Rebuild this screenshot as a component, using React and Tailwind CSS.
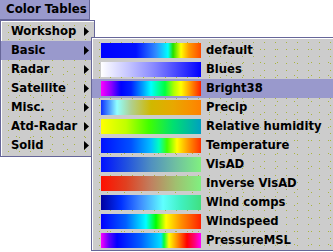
import React from "react";

const categories = ["Workshop", "Basic", "Radar", "Satellite", "Misc.", "Atd-Radar", "Solid"];

// colour tables in the Basic submenu
const tables = [
  { name: "default", bar: "bg-[linear-gradient(90deg,#0000ff_0%,#0010ff_35%,#2f8cff_55%,#00ffff_67%,#20e000_72%,#ffff00_80%,#ff9a00_88%,#ff4a00_100%)]" },
  { name: "Blues", bar: "bg-[linear-gradient(90deg,#ffffff_0%,#f2f2ff_6%,#c4c4ff_28%,#8a8aff_52%,#3a3aff_80%,#0000ff_100%)]" },
  { name: "Bright38", bar: "bg-[linear-gradient(90deg,#ff00ff_0%,#9000ff_10%,#0000ff_20%,#0020ff_30%,#00a0ff_42%,#00ffff_50%,#00ff40_64%,#b0ff00_73%,#ffff00_80%,#ff9000_90%,#ff2000_100%)]" },
  { name: "Precip", bar: "bg-[linear-gradient(90deg,#1030ff_0%,#3a80ff_6%,#90ffff_16%,#b0d090_30%,#d0b800_50%,#e8a800_72%,#f89000_90%,#ff8000_100%)]" },
  { name: "Relative humidity", bar: "bg-[linear-gradient(90deg,#ffff00_0%,#c0ff00_25%,#40ff00_48%,#00e070_72%,#00a0c0_100%)]" },
  { name: "Temperature", bar: "bg-[linear-gradient(90deg,#0010ff_0%,#0050ff_30%,#00c0ff_50%,#00ffc0_58%,#40ff00_66%,#ffff00_76%,#ff9000_88%,#ff3000_100%)]" },
  { name: "VisAD", bar: "bg-[linear-gradient(90deg,#0010ff_0%,#2050e0_25%,#5090c0_50%,#70c0a0_75%,#80f080_100%)]" },
  { name: "Inverse VisAD", bar: "bg-[linear-gradient(90deg,#ff1000_0%,#e04020_25%,#c08060_50%,#a0c070_75%,#80f080_100%)]" },
  { name: "Wind comps", bar: "bg-[linear-gradient(90deg,#0000a0_0%,#0030ff_20%,#4090ff_40%,#60ffff_62%,#40f0c0_80%,#40e080_100%)]" },
  { name: "Windspeed", bar: "bg-[linear-gradient(90deg,#0000ff_0%,#0060ff_25%,#00ffff_45%,#00ff00_55%,#ffff00_65%,#ff9000_80%,#ff2000_100%)]" },
  { name: "PressureMSL", bar: "bg-[linear-gradient(90deg,#ff00ff_0%,#6000ff_8%,#0000ff_16%,#0060ff_40%,#00e0ff_60%,#00ff40_63%,#ffff00_68%,#ff9000_76%,#ff0000_86%,#ff0080_94%,#ff00ff_100%)]" },
];

const Arrow = () => (
  <svg width="5" height="9" viewBox="0 0 5 9" className="shrink-0">
    <path d="M0 0 L5 4.5 L0 9 Z" fill="#000" />
  </svg>
);

// sparse yellow dither dots on the menu background
const dither =
  "bg-[radial-gradient(circle,#a9b43c_0.7px,transparent_0.9px),radial-gradient(circle,#a9b43c_0.7px,transparent_0.9px)] bg-[length:11px_7px,17px_13px] bg-[position:2px_1px,7px_5px]";

const App = () => {
  return (
    <div className="relative w-[333px] h-[252px] overflow-hidden bg-white font-['DejaVu_Sans',sans-serif] font-bold text-[11.6px] text-black">
      {/* menu bar title */}
      <div className="w-[90px] h-[20px] bg-[#9999cc] border-r border-b border-[#666699] flex items-center pl-[6px] text-[11.8px] leading-none">
        Color Tables
      </div>

      {/* first level menu */}
      <div className={`w-[95px] border border-[#666699] bg-[#cccccc] shadow-[inset_1px_1px_0_#ffffff] pt-[1px] pb-[1px] ${dither}`}>
        {categories.map((c) => (
          <div
            key={c}
            className={`h-[19px] flex items-center justify-between pl-[10px] pr-[5px] ${c === "Basic" ? "bg-[#9999cc]" : ""}`}
          >
            <span>{c}</span>
            <Arrow />
          </div>
        ))}
      </div>

      {/* Basic submenu */}
      <div className={`absolute left-[91px] top-[37px] w-[260px] border border-[#666699] bg-[#cccccc] shadow-[inset_1px_1px_0_#ffffff] pt-[3px] ${dither}`}>
        {tables.map((t) => (
          <div
            key={t.name}
            className={`h-[19px] flex items-center gap-[5px] pl-[9px] ${t.name === "Bright38" ? "bg-[#9999cc]" : ""}`}
          >
            <div className={`w-[100px] h-[15px] shrink-0 ${t.bar}`} />
            <span className="whitespace-nowrap">{t.name}</span>
          </div>
        ))}
      </div>
    </div>
  );
};

export default App;
